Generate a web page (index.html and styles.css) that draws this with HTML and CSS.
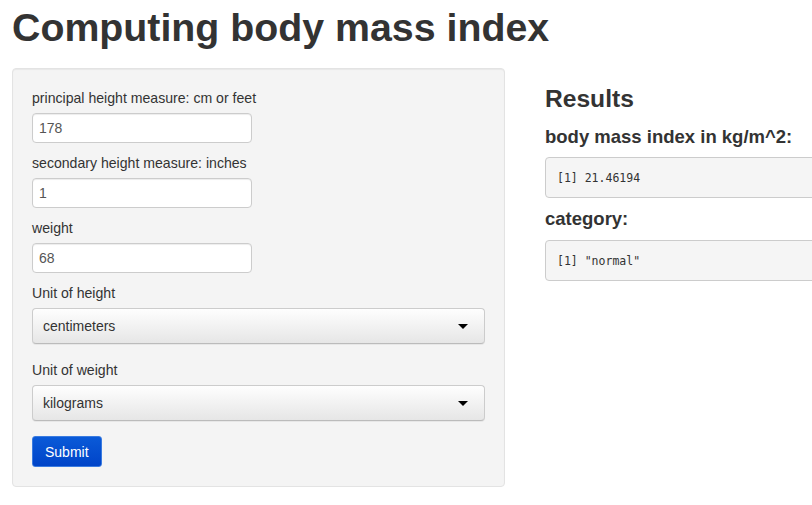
FILE: index.html
```html
<!DOCTYPE html>
<html>
<head>
<meta charset="utf-8">
<title>Computing body mass index</title>
<link rel="stylesheet" href="styles.css">
</head>
<body>
<div class="page">
  <h1 class="title">Computing body mass index</h1>
  <div class="row">
    <div class="well">
      <div class="group">
        <label class="lbl">principal height measure: cm or feet</label>
        <input class="field" type="text" value="178">
      </div>
      <div class="group">
        <label class="lbl">secondary height measure: inches</label>
        <input class="field" type="text" value="1">
      </div>
      <div class="group">
        <label class="lbl">weight</label>
        <input class="field" type="text" value="68">
      </div>
      <div class="group sel-group">
        <label class="lbl">Unit of height</label>
        <div class="select"><span>centimeters</span><span class="caret"></span></div>
      </div>
      <div class="group sel-group">
        <label class="lbl">Unit of weight</label>
        <div class="select"><span>kilograms</span><span class="caret"></span></div>
      </div>
      <button class="submit" type="button">Submit</button>
    </div>
    <div class="main">
      <h3 class="results">Results</h3>
      <h4 class="sub">body mass index in kg/m^2:</h4>
      <pre class="out">[1] 21.46194</pre>
      <h4 class="sub">category:</h4>
      <pre class="out">[1] "normal"</pre>
    </div>
  </div>
</div>
</body>
</html>
```
FILE: styles.css
```css
html, body {
  margin: 0;
  padding: 0;
  overflow: hidden;
  background: #fff;
}
body {
  font-family: "Liberation Sans", Arial, sans-serif;
  font-size: 14px;
  line-height: 20px;
  color: #333;
}
.page {
  padding: 0 0 0 12px;
  width: 960px;
}
.title {
  font-size: 39.3px;
  font-weight: bold;
  line-height: 42px;
  margin: 6px 0 20px 0;
  color: #333;
}
.row {
  display: flex;
  align-items: flex-start;
}
.well {
  flex: 0 0 auto;
  width: 453px;
  padding: 19px;
  background: #f4f4f4;
  border: 1px solid #e3e3e3;
  border-radius: 4px;
  box-shadow: inset 0 1px 1px rgba(0,0,0,0.05);
}
.group {
  display: flex;
  flex-direction: column;
  margin-bottom: 10px;
}
.sel-group {
  margin-bottom: 16px;
}
.lbl {
  display: block;
  margin-bottom: 5px;
  font-weight: normal;
  font-size: 14.1px;
  line-height: 20px;
}
.field {
  box-sizing: border-box;
  width: 220px;
  height: 30px;
  padding: 4px 6px;
  font-family: "Liberation Sans", Arial, sans-serif;
  font-size: 14px;
  color: #555;
  background: #fff;
  border: 1px solid #ccc;
  border-radius: 4px;
  box-shadow: inset 0 1px 1px rgba(0,0,0,0.075);
  outline: none;
}
.select {
  box-sizing: border-box;
  height: 36px;
  display: flex;
  align-items: center;
  justify-content: space-between;
  padding: 0 16px 0 10px;
  border: 1px solid #ccc;
  border-bottom-color: #bbb;
  border-radius: 4px;
  background: linear-gradient(#fefefe, #e6e6e6);
  box-shadow: 0 1px 0 rgba(0,0,0,0.05);
  color: #333;
}
.caret {
  width: 0;
  height: 0;
  border-left: 5px solid transparent;
  border-right: 5px solid transparent;
  border-top: 5px solid #000;
}
.submit {
  display: block;
  margin-top: -1px;
  height: 31px;
  padding: 0 12px;
  font-family: "Liberation Sans", Arial, sans-serif;
  font-size: 14px;
  color: #fff;
  background: linear-gradient(#0a5ad8, #0044c8);
  border: 1px solid #3a7be0;
  border-radius: 3px;
  cursor: pointer;
}
.main {
  flex: 0 0 auto;
  margin-left: 40px;
  width: 400px;
  padding-top: 18px;
}
.results {
  font-size: 24.6px;
  font-weight: bold;
  line-height: 26px;
  margin: 0 0 15px 0;
}
.sub {
  font-size: 18.5px;
  font-weight: bold;
  line-height: 20px;
  margin: 11px 0 11px 0;
}
.results + .sub {
  margin: 0 0 10px 0;
}
.out {
  margin: 0;
  padding: 9.5px 11px;
  font-family: "DejaVu Sans Mono", "Liberation Mono", monospace;
  font-size: 11.5px;
  line-height: 20px;
  color: #333;
  background: #f5f5f5;
  border: 1px solid #ccc;
  border-radius: 4px;
}
```
